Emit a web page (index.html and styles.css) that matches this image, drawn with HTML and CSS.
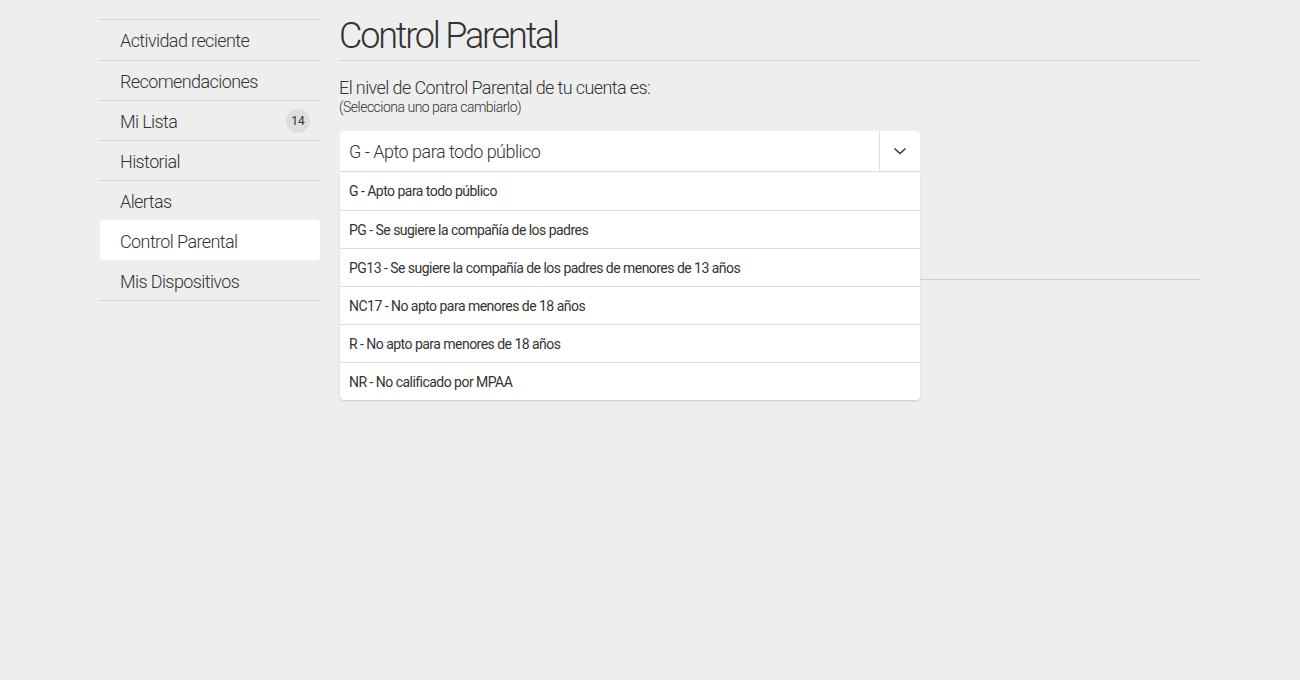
FILE: index.html
```html
<!DOCTYPE html>
<html lang="es">
<head>
<meta charset="utf-8">
<title>Control Parental</title>
<link rel="stylesheet" href="styles.css">
</head>
<body>
<div class="page">
  <nav class="sidebar">
    <a class="nav-item">Actividad reciente</a>
    <a class="nav-item">Recomendaciones</a>
    <a class="nav-item">Mi Lista <span class="badge">14</span></a>
    <a class="nav-item">Historial</a>
    <a class="nav-item">Alertas</a>
    <a class="nav-item active">Control Parental</a>
    <a class="nav-item">Mis Dispositivos</a>
  </nav>
  <main class="content">
    <h1 class="title">Control Parental</h1>
    <section class="level">
      <p class="lead">El nivel de Control Parental de tu cuenta es:</p>
      <p class="hint">(Selecciona uno para cambiarlo)</p>
      <div class="select">
        <div class="select-box">
          <span class="select-value">G - Apto para todo público</span>
          <span class="select-arrow">
            <svg width="14" height="14" viewBox="0 0 14 14"><path d="M1.5 4.5 L7 9.5 L12.5 4.5" fill="none" stroke="#333" stroke-width="1.5"/></svg>
          </span>
        </div>
        <ul class="options">
          <li>G - Apto para todo público</li>
          <li>PG - Se sugiere la compañía de los padres</li>
          <li>PG13 - Se sugiere la compañía de los padres de menores de 13 años</li>
          <li>NC17 - No apto para menores de 18 años</li>
          <li>R - No apto para menores de 18 años</li>
          <li>NR - No calificado por MPAA</li>
        </ul>
      </div>
    </section>
  </main>
</div>
</body>
</html>
```

FILE: styles.css
```css
* { box-sizing: border-box; }
html, body { margin: 0; padding: 0; }
body {
  background: #eeeeee;
  font-family: Roboto, "Liberation Sans", sans-serif;
  font-weight: 300;
  color: #333;
  min-height: 680px;
}
.page {
  display: flex;
  gap: 20px;
  width: 1100px;
  margin: 0 auto;
  padding-top: 20px;
}
.sidebar {
  width: 220px;
  flex: none;
  align-self: flex-start;
  display: flex;
  flex-direction: column;
  border-top: 1px solid #cfcfcf;
  border-bottom: 1px solid #cfcfcf;
  margin-top: -1px;
}
.nav-item {
  display: flex;
  align-items: center;
  justify-content: space-between;
  height: 40px;
  padding: 1px 10px 0 20px;
  font-size: 18px;
  color: #333;
  letter-spacing: -0.6px;
}
.nav-item + .nav-item { border-top: 1px solid #cfcfcf; }
.nav-item.active {
  background: #fff;
  border-radius: 4px;
  border-top-color: transparent;
}
.nav-item.active + .nav-item { border-top-color: transparent; }
.badge {
  width: 24px;
  height: 24px;
  border-radius: 50%;
  background: #dedede;
  font-size: 12px;
  font-weight: 400;
  display: flex;
  align-items: center;
  justify-content: center;
  letter-spacing: 0;
}
.content {
  flex: 1;
  min-width: 0;
}
.title {
  margin: -4px 0 0 0;
  padding-left: 0;
  text-indent: -1px;
  font-weight: 300;
  font-size: 36px;
  letter-spacing: -2.2px;
  line-height: 40px;
  height: 45px;
  border-bottom: 1px solid #cfcfcf;
}
.level {
  height: 219px;
  border-bottom: 1px solid #cfcfcf;
  padding-top: 17px;
}
.lead {
  margin: 0 0 0 -1px;
  font-size: 18px;
  line-height: 20px;
  letter-spacing: -0.6px;
}
.hint {
  margin: 0 0 0 -1px;
  font-size: 14px;
  line-height: 18px;
  letter-spacing: -0.5px;
}
.select {
  position: relative;
  width: 580px;
  margin-top: 15px;
}
.select-box {
  display: flex;
  height: 41px;
  background: #fff;
  border-radius: 4px 4px 0 0;
  border-bottom: 1px solid #dcdcdc;
}
.select-value {
  flex: 1;
  display: flex;
  align-items: center;
  padding-left: 9px;
  font-size: 18px;
  letter-spacing: -0.5px;
}
.select-arrow {
  width: 41px;
  border-left: 1px solid #dcdcdc;
  display: flex;
  align-items: center;
  justify-content: center;
}
.options {
  position: absolute;
  left: 0;
  right: 0;
  top: 41px;
  margin: 0;
  padding: 0;
  list-style: none;
  background: #fff;
  border-radius: 0 0 4px 4px;
  box-shadow: 0 1px 2px rgba(0,0,0,0.15);
}
.options li {
  height: 38px;
  display: flex;
  align-items: center;
  padding-left: 9px;
  font-size: 14px;
  font-weight: 400;
  letter-spacing: -0.53px;
}
.options li + li { border-top: 1px solid #dcdcdc; }
```
